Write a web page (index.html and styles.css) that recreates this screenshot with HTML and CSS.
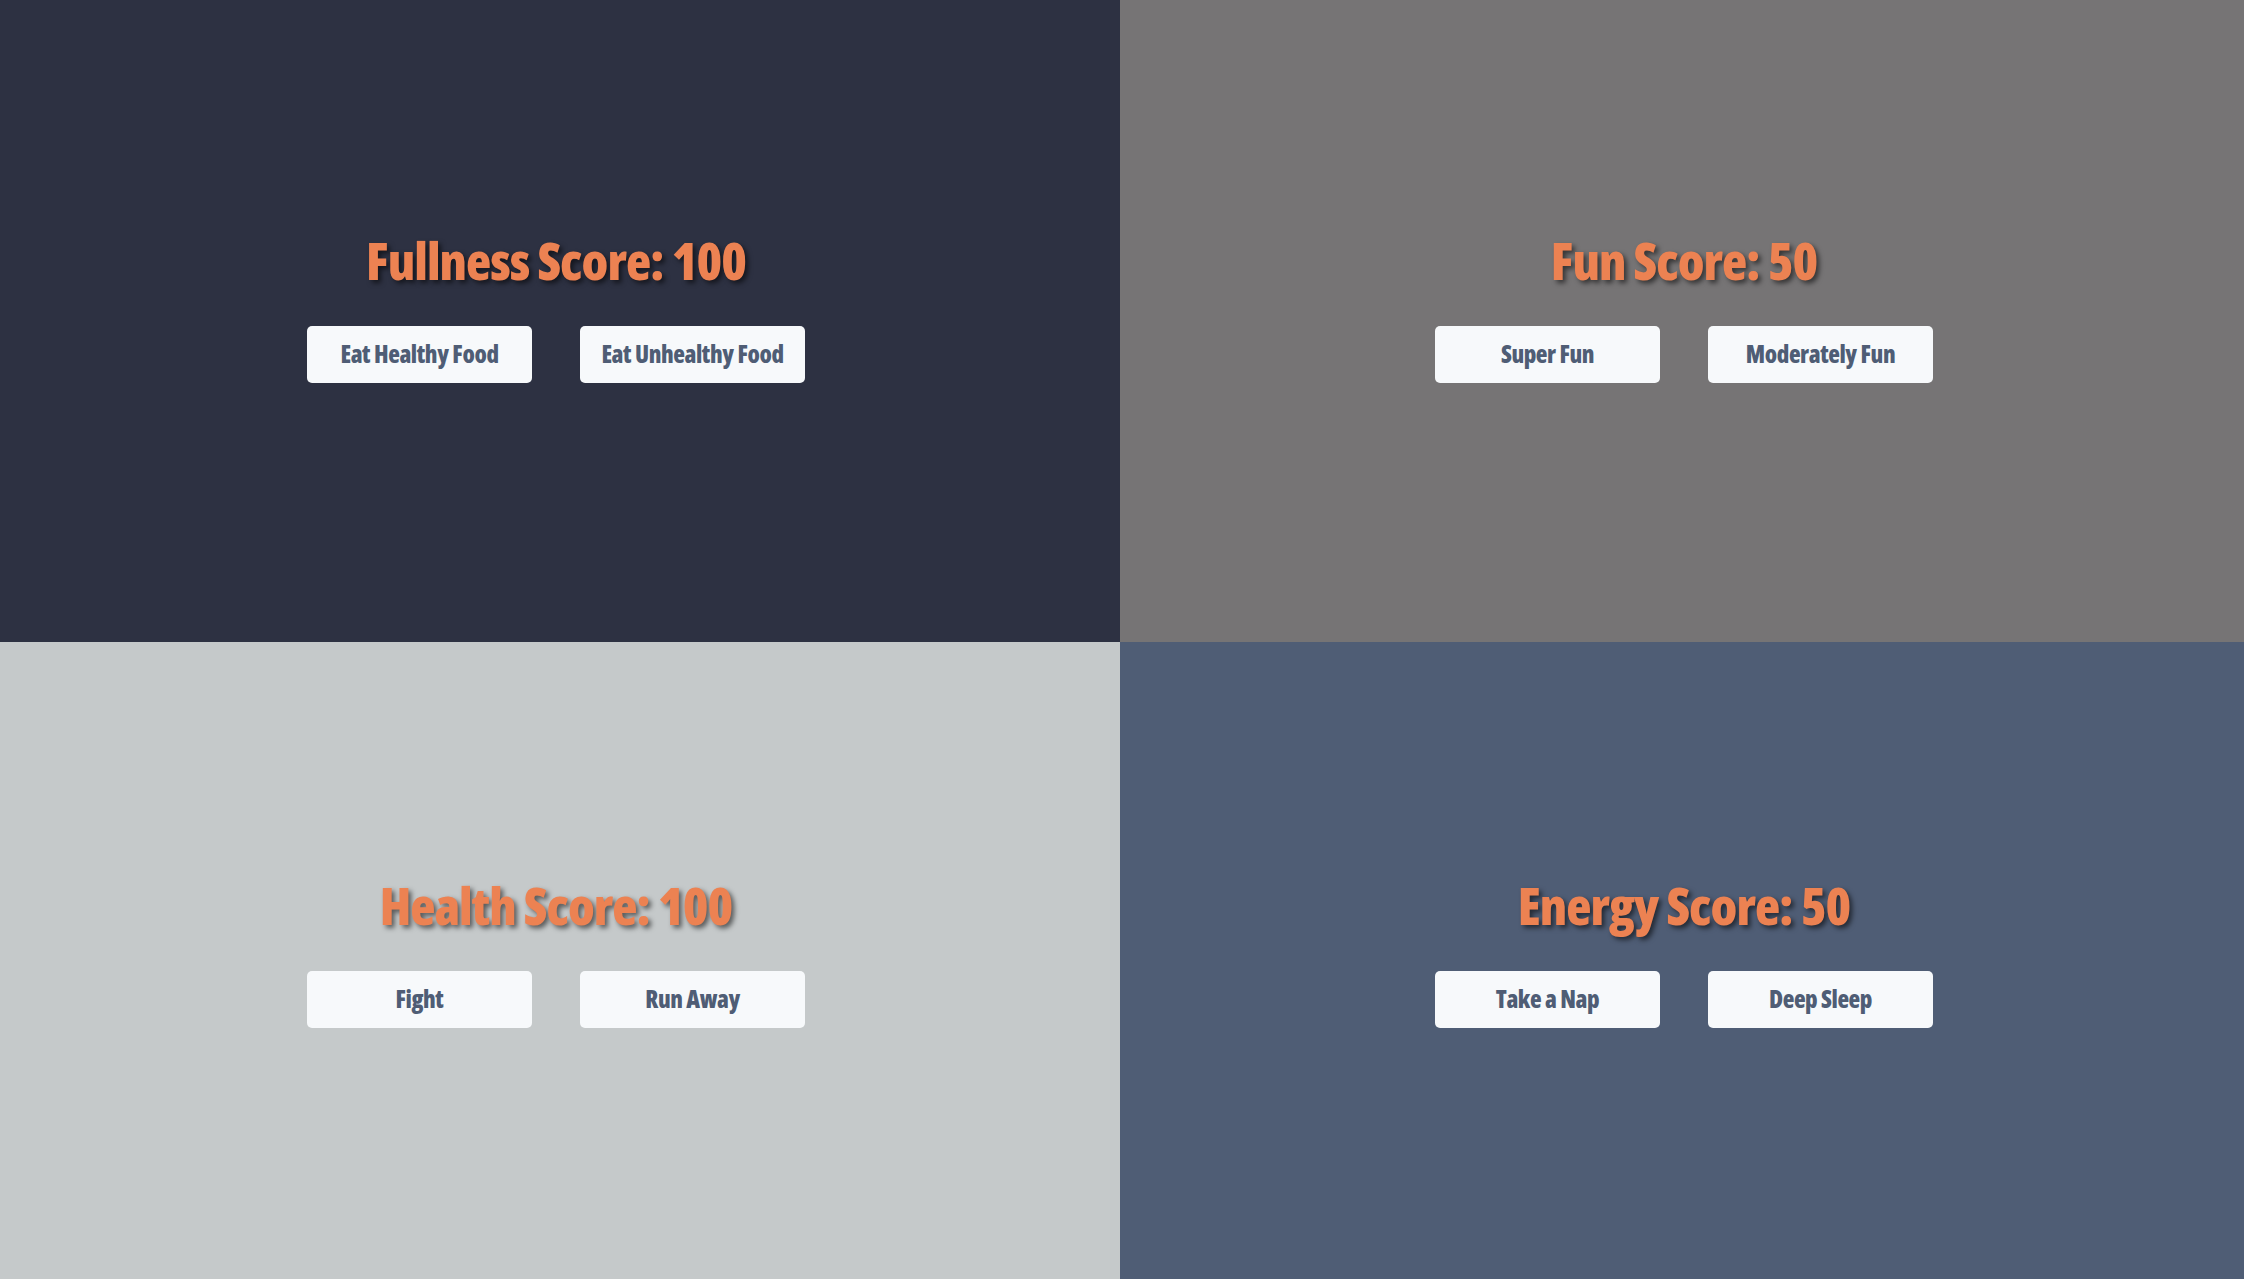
FILE: index.html
```html
<!DOCTYPE html>
<html lang="en">
<head>
<meta charset="utf-8">
<title>Pet Scores</title>
<link rel="stylesheet" href="styles.css">
</head>
<body>
<main class="board">
  <section class="panel panel-fullness">
    <h1 class="score">Fullness Score: 100</h1>
    <div class="actions">
      <button class="action">Eat Healthy Food</button>
      <button class="action">Eat Unhealthy Food</button>
    </div>
  </section>
  <section class="panel panel-fun">
    <h1 class="score">Fun Score: 50</h1>
    <div class="actions">
      <button class="action">Super Fun</button>
      <button class="action">Moderately Fun</button>
    </div>
  </section>
  <section class="panel panel-health">
    <h1 class="score">Health Score: 100</h1>
    <div class="actions">
      <button class="action">Fight</button>
      <button class="action">Run Away</button>
    </div>
  </section>
  <section class="panel panel-energy">
    <h1 class="score">Energy Score: 50</h1>
    <div class="actions">
      <button class="action">Take a Nap</button>
      <button class="action">Deep Sleep</button>
    </div>
  </section>
</main>
</body>
</html>
```
FILE: styles.css
```css
html, body {
  margin: 0;
  padding: 0;
  height: 100%;
}
body {
  font-family: "Open Sans", "Roboto Condensed", "Liberation Sans Narrow", sans-serif;
  font-stretch: 75%;
  overflow: hidden;
}
.board {
  display: grid;
  grid-template-columns: 1120px 1fr;
  grid-template-rows: 642px 1fr;
  height: 100vh;
}
.panel {
  display: flex;
  flex-direction: column;
  align-items: center;
  padding-top: 230px;
  box-sizing: border-box;
}
.panel-fullness { background: #2d3142; padding-right: 8px; }
.panel-fun { background: #767475; padding-left: 4px; }
.panel-health { background: #c5c9ca; padding-right: 8px; padding-top: 233px; }
.panel-energy { background: #4f5d75; padding-left: 4px; padding-top: 233px; }

.score {
  margin: 0;
  font-size: 52px;
  line-height: 60px;
  font-weight: 800;
  font-stretch: 75%;
  letter-spacing: -1px;
  color: #ec8252;
  text-shadow: 3px 3px 5px rgba(0, 0, 0, 0.55);
}
.actions {
  display: flex;
  gap: 48px;
  margin-top: 36px;
}
.action {
  width: 225px;
  height: 57px;
  border: none;
  border-radius: 5px;
  background: #f7f9fb;
  color: #4f5d75;
  font-family: "Open Sans", "Roboto Condensed", "Liberation Sans Narrow", sans-serif;
  font-stretch: 75%;
  font-weight: 800;
  font-size: 24px;
  letter-spacing: -0.4px;
  padding: 0 0 3px;
  cursor: pointer;
}
```
